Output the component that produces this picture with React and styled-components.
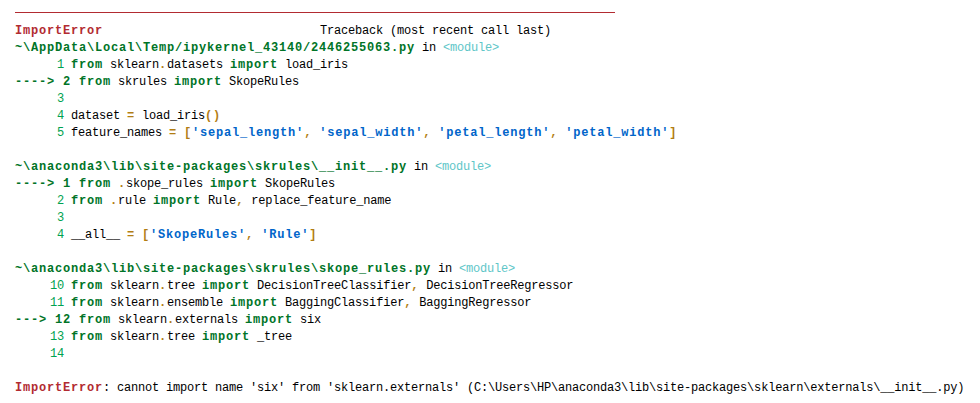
import React from "react";
import styled, { createGlobalStyle } from "styled-components";

const Global = createGlobalStyle`
  html, body { margin: 0; padding: 0; background: #ffffff; }
  body { font-family: "Liberation Mono", "DejaVu Sans Mono", monospace; }
`;

const Output = styled.div`
  padding: 12px 0 0 15px;
  font-family: "Liberation Mono", "DejaVu Sans Mono", monospace;
  font-size: 12px;
  color: #000000;
`;

const Rule = styled.div`
  width: 600px;
  height: 1px;
  background: #b22b31;
  margin-bottom: 10px;
`;

const Line = styled.div`
  height: 17px;
  line-height: 17px;
  white-space: pre;
`;

const palette = {
  plain: { color: "#000000", bold: false },
  err: { color: "#b22b31", bold: true },
  path: { color: "#007427", bold: true },
  mod: { color: "#60c6c8", bold: false },
  num: { color: "#00a250", bold: false },
  cur: { color: "#007427", bold: true },
  kw: { color: "#007427", bold: true },
  op: { color: "#b27d12", bold: true },
  str: { color: "#0065ca", bold: true },
};

const Seg = styled.span`
  color: ${(p) => palette[p.$kind].color};
  font-weight: ${(p) => (palette[p.$kind].bold ? 700 : 400)};
  letter-spacing: ${(p) => (palette[p.$kind].bold ? "0.8px" : "-0.2px")};
`;

const P = (t) => ["plain", t];
const K = (t) => ["kw", t];
const O = (t) => ["op", t];
const S = (t) => ["str", t];
const N = (t) => ["num", t];
const C = (t) => ["cur", t];
const IN = [P(" in "), ["mod", "<module>"]];

const lines = [
  [["err", "ImportError"], P(" ".repeat(31) + "Traceback (most recent call last)")],
  [["path", "~\\AppData\\Local\\Temp/ipykernel_43140/2446255063.py"], ...IN],
  [N("      1"), P(" "), K("from"), P(" sklearn"), O("."), P("datasets "), K("import"), P(" load_iris")],
  [C("----> 2 "), K("from"), P(" skrules "), K("import"), P(" SkopeRules")],
  [N("      3")],
  [N("      4"), P(" dataset "), O("="), P(" load_iris"), O("()")],
  [
    N("      5"), P(" feature_names "), O("="), P(" "), O("["),
    S("'sepal_length'"), O(","), P(" "), S("'sepal_width'"), O(","), P(" "),
    S("'petal_length'"), O(","), P(" "), S("'petal_width'"), O("]"),
  ],
  [],
  [["path", "~\\anaconda3\\lib\\site-packages\\skrules\\__init__.py"], ...IN],
  [C("----> 1 "), K("from"), P(" "), O("."), P("skope_rules "), K("import"), P(" SkopeRules")],
  [N("      2"), P(" "), K("from"), P(" "), O("."), P("rule "), K("import"), P(" Rule"), O(","), P(" replace_feature_name")],
  [N("      3")],
  [N("      4"), P(" __all__ "), O("="), P(" "), O("["), S("'SkopeRules'"), O(","), P(" "), S("'Rule'"), O("]")],
  [],
  [["path", "~\\anaconda3\\lib\\site-packages\\skrules\\skope_rules.py"], ...IN],
  [N("     10"), P(" "), K("from"), P(" sklearn"), O("."), P("tree "), K("import"), P(" DecisionTreeClassifier"), O(","), P(" DecisionTreeRegressor")],
  [N("     11"), P(" "), K("from"), P(" sklearn"), O("."), P("ensemble "), K("import"), P(" BaggingClassifier"), O(","), P(" BaggingRegressor")],
  [C("---> 12 "), K("from"), P(" sklearn"), O("."), P("externals "), K("import"), P(" six")],
  [N("     13"), P(" "), K("from"), P(" sklearn"), O("."), P("tree "), K("import"), P(" _tree")],
  [N("     14")],
  [],
  [
    ["err", "ImportError"],
    P(": cannot import name 'six' from 'sklearn.externals' (C:\\Users\\HP\\anaconda3\\lib\\site-packages\\sklearn\\externals\\__init__.py)"),
  ],
];

export default function App() {
  return (
    <>
      <Global />
      <Output>
        <Rule />
        {lines.map((segs, i) => (
          <Line key={i}>
            {segs.map(([kind, text], j) => (
              <Seg key={j} $kind={kind}>
                {text}
              </Seg>
            ))}
          </Line>
        ))}
      </Output>
    </>
  );
}
